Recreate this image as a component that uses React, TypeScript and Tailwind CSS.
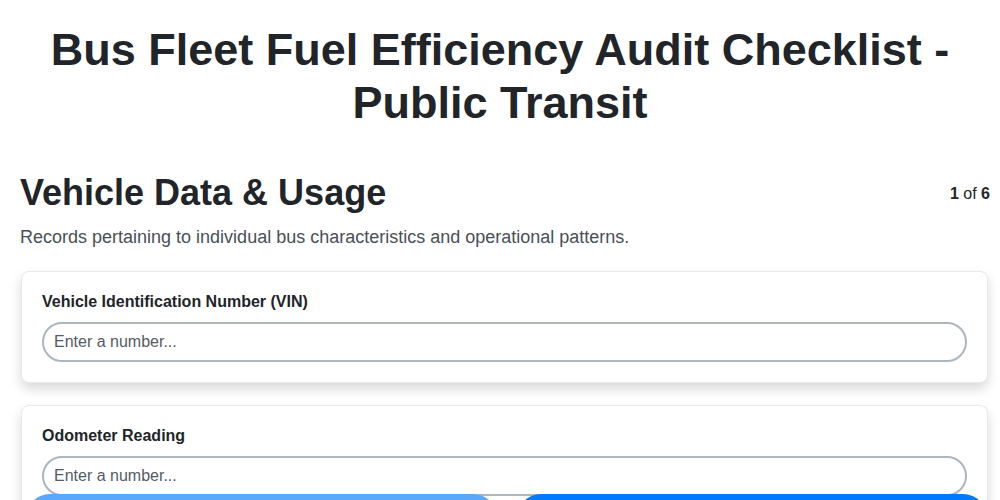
import React from 'react';

const fields = ['Vehicle Identification Number (VIN)', 'Odometer Reading'];

export default function App() {
  return (
    <div
      className="min-h-screen bg-white text-[#212529]"
      style={{ fontFamily: '"Liberation Sans", Arial, sans-serif' }}
    >
      {/* Title */}
      <h1 className="mx-auto max-w-[940px] pt-[23px] text-center text-[45px] font-bold leading-[53px]">
        Bus Fleet Fuel Efficiency Audit Checklist - Public Transit
      </h1>

      {/* Section header */}
      <div className="mt-[42px] flex items-start justify-between pl-5 pr-[10px]">
        <h2 className="text-[36px] font-bold leading-[1.2]">Vehicle Data &amp; Usage</h2>
        <div className="pt-[11px] text-base">
          <b>1</b> of <b>6</b>
        </div>
      </div>
      <p className="mt-[10px] pl-5 text-[18px] leading-[27px] text-[#495057]">
        Records pertaining to individual bus characteristics and operational patterns.
      </p>

      {/* Questions */}
      <div className="mt-[20px] flex flex-col gap-[22px] pb-24 pl-[21px] pr-[12px]">
        {fields.map((label) => (
          <div
            key={label}
            className="rounded-lg border border-[#e9e9ef] bg-white px-5 pb-5 pt-[18px] shadow-[0_6px_12px_rgba(0,0,0,0.15)]"
          >
            <label className="block text-base font-bold leading-6">{label}</label>
            <input
              type="text"
              placeholder="Enter a number..."
              className="mt-2 block h-10 w-full rounded-full border-2 border-[#adb5bd] bg-white px-[10px] text-base text-[#212529] placeholder:text-[#555b66] outline-none"
            />
          </div>
        ))}
      </div>

      {/* Navigation (fixed footer, only its top edge shows in view) */}
      <div className="fixed bottom-[-44px] left-0 right-0 flex gap-[18px] pl-[25px] pr-[12px]">
        <button aria-label="Previous" className="h-[50px] flex-1 rounded-full bg-[#5aa8fb]" />
        <button aria-label="Next" className="h-[50px] flex-1 rounded-full bg-[#007bff]" />
      </div>
    </div>
  );
}
